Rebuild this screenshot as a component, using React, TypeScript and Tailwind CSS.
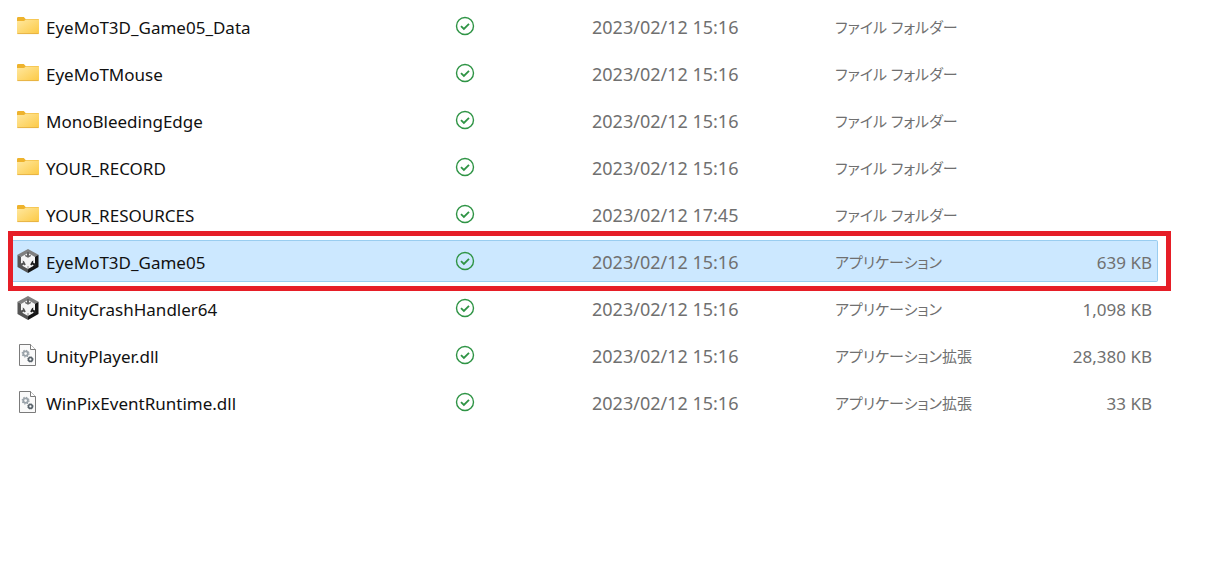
import clsx from 'clsx';

type IconKind = 'folder' | 'unity' | 'dll';

interface FileEntry {
  name: string;
  icon: IconKind;
  modified: string;
  type: string;
  size?: string;
  selected?: boolean;
}

const files: FileEntry[] = [
  { name: 'EyeMoT3D_Game05_Data', icon: 'folder', modified: '2023/02/12 15:16', type: 'ファイル フォルダー' },
  { name: 'EyeMoTMouse', icon: 'folder', modified: '2023/02/12 15:16', type: 'ファイル フォルダー' },
  { name: 'MonoBleedingEdge', icon: 'folder', modified: '2023/02/12 15:16', type: 'ファイル フォルダー' },
  { name: 'YOUR_RECORD', icon: 'folder', modified: '2023/02/12 15:16', type: 'ファイル フォルダー' },
  { name: 'YOUR_RESOURCES', icon: 'folder', modified: '2023/02/12 17:45', type: 'ファイル フォルダー' },
  { name: 'EyeMoT3D_Game05', icon: 'unity', modified: '2023/02/12 15:16', type: 'アプリケーション', size: '639 KB', selected: true },
  { name: 'UnityCrashHandler64', icon: 'unity', modified: '2023/02/12 15:16', type: 'アプリケーション', size: '1,098 KB' },
  { name: 'UnityPlayer.dll', icon: 'dll', modified: '2023/02/12 15:16', type: 'アプリケーション拡張', size: '28,380 KB' },
  { name: 'WinPixEventRuntime.dll', icon: 'dll', modified: '2023/02/12 15:16', type: 'アプリケーション拡張', size: '33 KB' },
];

function FolderIcon() {
  return (
    <svg width="22" height="24" viewBox="0 0 22 24" aria-hidden="true">
      <defs>
        <linearGradient id="folder" x1="0" y1="0" x2="1" y2="1">
          <stop offset="0" stopColor="#ffe8a0" />
          <stop offset="1" stopColor="#fcc944" />
        </linearGradient>
      </defs>
      <path d="M0 4.2Q0 3 1.2 3H6.8L8.6 5H21.2Q22 5 22 6V12H0Z" fill="#eeb32d" />
      <path d="M0 7H7L8.8 5.6H22V19Q22 20 21 20H1Q0 20 0 19Z" fill="url(#folder)" />
      <path d="M.4 19.6H21.6" stroke="#dfaa3d" strokeWidth=".8" />
    </svg>
  );
}

function UnityIcon() {
  return (
    <svg width="22" height="24" viewBox="0 0 22 24" aria-hidden="true">
      <path d="M11 0L21.5 5.8L11 12L.5 5.8Z" fill="#808080" />
      <path d="M.5 5.8L11 12V24L.5 18Z" fill="#555" />
      <path d="M21.5 5.8L11 12V24L21.5 18Z" fill="#151515" />
      <path d="M11 4L18 8V16L11 20L4 16V8Z" fill="#f5f5f5" />
      <path d="M10 3H12V6.6L13.8 5.8V7.2L11 8.8L8.2 7.2V5.8L10 6.6Z" fill="#666" />
      <path d="M3 17.2V15L6 13.4L5.6 11.6L7 12.2L8.8 15.4L7.6 16.4L6.6 15.6L4.4 17.4Z" fill="#555" />
      <path d="M19 17.2V15L16 13.4L16.4 11.6L15 12.2L13.2 15.4L14.4 16.4L15.4 15.6L17.6 17.4Z" fill="#222" />
      <path d="M11 17V20.5" fill="none" stroke="#777" strokeWidth=".8" />
    </svg>
  );
}

function DllIcon() {
  return (
    <svg width="22" height="24" viewBox="0 0 22 24" aria-hidden="true">
      <path d="M2.5 1.5H13.5L18.5 6.5V22.5H2.5Z" fill="#fafafa" stroke="#7b7b7b" />
      <path d="M13.5 1.5V6.5H18.5" fill="#fff" stroke="#7b7b7b" />
      <circle cx="8.6" cy="10.6" r="2.3" fill="none" stroke="#9aa3aa" strokeWidth="1.8" />
      <circle cx="8.6" cy="10.6" r="3.4" fill="none" stroke="#9aa3aa" strokeWidth="1.2" strokeDasharray="1.3 1.37" />
      <circle cx="13.4" cy="16.4" r="1.9" fill="none" stroke="#59636b" strokeWidth="1.6" />
      <circle cx="13.4" cy="16.4" r="2.7" fill="none" stroke="#59636b" strokeWidth="1" strokeDasharray="1 1.12" />
    </svg>
  );
}

function SyncedIcon() {
  return (
    <svg width="20" height="20" viewBox="0 0 20 20" fill="none" stroke="#2f9445" role="img" aria-label="同期済み">
      <circle cx="10" cy="10" r="8.5" strokeWidth="1.4" />
      <path d="M6 10.2L8.9 13L14 7.8" strokeWidth="1.8" />
    </svg>
  );
}

const icons = { folder: FolderIcon, unity: UnityIcon, dll: DllIcon };

function FileRow({ file }: { file: FileEntry }) {
  const Icon = icons[file.icon];
  const cell = clsx(
    'flex h-[42px] items-center border-y',
    file.selected ? 'border-[#99cdf0] bg-[#cce8ff]' : 'border-transparent'
  );

  return (
    <tr className="relative h-[47px]" aria-selected={file.selected}>
      <td className="p-0">
        <div className={clsx(cell, 'gap-[7px] pl-1 text-[#111]')}>
          <Icon />
          <span className="pt-1">{file.name}</span>
        </div>
      </td>
      <td className="p-0">
        <div className={cell}>
          <SyncedIcon />
        </div>
      </td>
      <td className="p-0">
        <div className={clsx(cell, 'pt-0.5 pl-px text-[18px]')}>{file.modified}</div>
      </td>
      <td className="p-0">
        <div className={clsx(cell, 'pt-0.5 text-[15px]')}>{file.type}</div>
      </td>
      <td className="p-0">
        <div className={clsx(cell, 'justify-end rounded-r-xs border-r pt-1 pr-[5px]')}>{file.size}</div>
        {file.selected && (
          <div className="pointer-events-none absolute -top-1.5 -right-[13px] -bottom-[7px] -left-[5px] border-5 border-[#e61e27]" />
        )}
      </td>
    </tr>
  );
}

export default function App() {
  return (
    <main className="min-h-screen bg-white pt-0.5 pr-[55px] pl-[13px] font-['Noto_Sans','Noto_Sans_CJK_JP',sans-serif] text-[17px] leading-6 text-[#707070]">
      <table className="w-full table-fixed border-collapse whitespace-nowrap [font-feature-settings:'palt']">
        <colgroup>
          <col className="w-[442px]" />
          <col className="w-[136px]" />
          <col className="w-[244px]" />
          <col className="w-[185px]" />
          <col />
        </colgroup>
        <tbody>
          {files.map((file) => (
            <FileRow key={file.name} file={file} />
          ))}
        </tbody>
      </table>
    </main>
  );
}
